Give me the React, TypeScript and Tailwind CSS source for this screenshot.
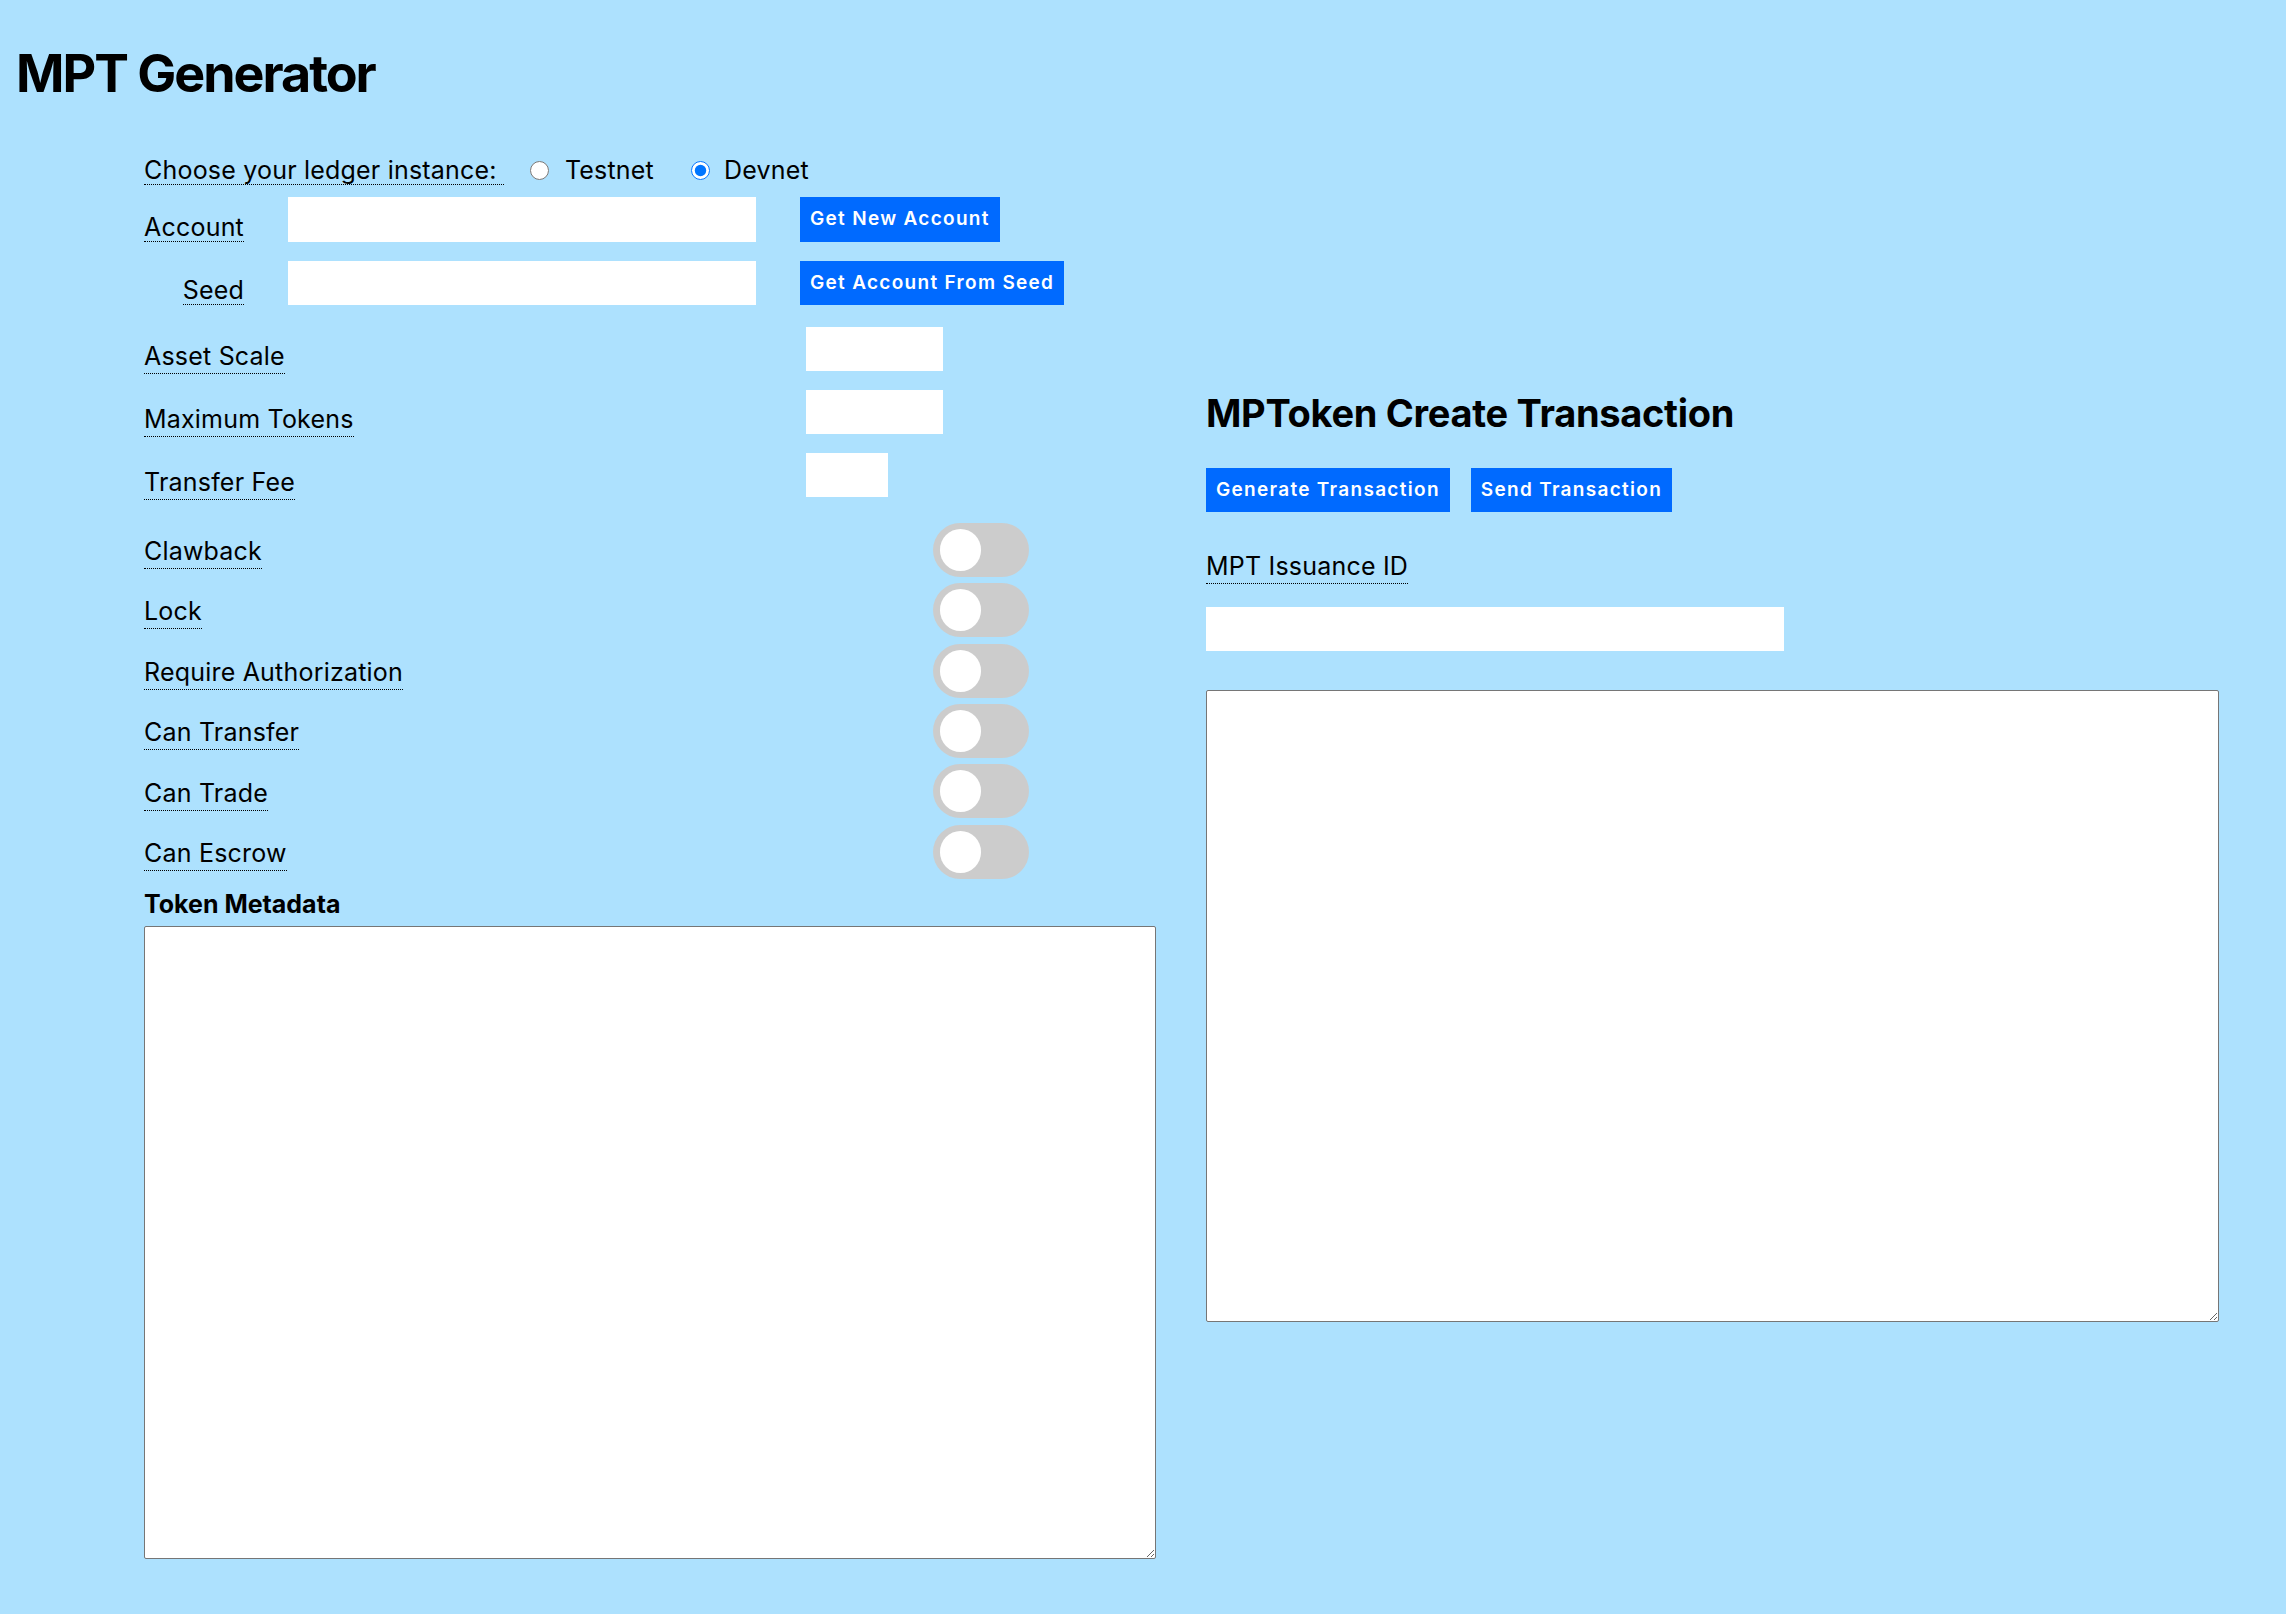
import { useState } from "react";

const font = "font-['Inter','Noto_Sans',sans-serif]";

const toggles = [
    "Clawback",
    "Lock",
    "Require Authorization",
    "Can Transfer",
    "Can Trade",
    "Can Escrow",
];

const Label = ({ children }: { children: React.ReactNode }) => (
    <label className="text-[25px] leading-[24px] tracking-[0.2px] pb-[2px] border-b border-dotted border-black text-black whitespace-nowrap">
        {children}
    </label>
);

const BlueButton = ({ children }: { children: React.ReactNode }) => (
    <button className="h-[44px] px-[10px] bg-[#006aff] text-white text-[19px] font-semibold tracking-[1.3px] whitespace-nowrap">
        {children}
    </button>
);

const Toggle = () => (
    <span className="flex items-center w-[96px] h-[54px] rounded-full bg-[#cccccc] pl-[7px]">
        <span className="w-[41px] h-[42px] rounded-full bg-white" />
    </span>
);

export default function App() {
    const [net, setNet] = useState("devnet");

    return (
        <div className={`min-h-screen bg-[#ade1fe] text-black ${font}`}>
            <div className="px-[16px] pt-[48px] pb-[40px]">
                <h1 className="text-[52px] leading-[52px] font-bold tracking-[-2px]">MPT Generator</h1>

                <div className="flex items-center gap-[49px] ml-[128px] mt-[58px]">
                    {/* left: form */}
                    <div className="flex flex-col w-[1013px]">
                        <div className="flex items-start h-[27px]">
                            <Label>Choose your ledger instance:&nbsp;</Label>
                            <div className="flex items-center h-[24px] ml-[26px] text-[25px] tracking-[0.2px]">
                                <input
                                    type="radio"
                                    name="net"
                                    checked={net === "testnet"}
                                    onChange={() => setNet("testnet")}
                                    className="w-[19px] h-[19px] m-0 accent-[#0075ff]"
                                />
                                <span className="leading-[24px] ml-[16px]">Testnet</span>
                                <input
                                    type="radio"
                                    name="net"
                                    checked={net === "devnet"}
                                    onChange={() => setNet("devnet")}
                                    className="w-[19px] h-[19px] m-0 ml-[37px] accent-[#0075ff]"
                                />
                                <span className="leading-[24px] ml-[14px]">Devnet</span>
                            </div>
                        </div>

                        <div className="flex items-end h-[45px] mt-[11.75px]">
                            <div className="w-[100px] flex justify-end">
                                <Label>Account</Label>
                            </div>
                            <input className="w-[468px] h-[45px] ml-[44px] bg-white outline-none" />
                            <div className="ml-[44px]">
                                <button className="h-[45px] px-[10px] bg-[#006aff] text-white text-[19px] font-semibold tracking-[1.3px] whitespace-nowrap">
                                    Get New Account
                                </button>
                            </div>
                        </div>

                        <div className="flex items-end h-[44px] mt-[19px]">
                            <div className="w-[100px] flex justify-end">
                                <Label>Seed</Label>
                            </div>
                            <input className="w-[468px] h-[44px] ml-[44px] bg-white outline-none" />
                            <div className="ml-[44px]">
                                <BlueButton>Get Account From Seed</BlueButton>
                            </div>
                        </div>

                        <div className="flex items-end h-[44px] mt-[22px]">
                            <div className="w-[662px]">
                                <Label>Asset Scale</Label>
                            </div>
                            <input className="w-[137px] h-[44px] bg-white outline-none" />
                        </div>

                        <div className="flex items-end h-[44px] mt-[19px]">
                            <div className="w-[662px]">
                                <Label>Maximum Tokens</Label>
                            </div>
                            <input className="w-[137px] h-[44px] bg-white outline-none" />
                        </div>

                        <div className="flex items-end h-[44px] mt-[19px]">
                            <div className="w-[662px]">
                                <Label>Transfer Fee</Label>
                            </div>
                            <input className="w-[82px] h-[44px] bg-white outline-none" />
                        </div>

                        <div className="flex flex-col gap-[6.4px] mt-[26px]">
                            {toggles.map((name) => (
                                <div key={name} className="flex items-center h-[54px]">
                                    <div className="w-[789px] pt-[5.5px]">
                                        <Label>{name}</Label>
                                    </div>
                                    <Toggle />
                                </div>
                            ))}
                        </div>

                        <p className="text-[25px] leading-[24px] font-bold mt-[13.25px]">Token Metadata</p>
                        <textarea className="w-[1012px] h-[633px] mt-[9.75px] bg-white border border-[#767676] rounded-[2px] outline-none" />
                    </div>

                    {/* right: transaction */}
                    <div className="flex flex-col w-[1014px]">
                        <h2 className="text-[38px] leading-[38px] font-bold tracking-[-0.3px]">MPToken Create Transaction</h2>
                        <div className="flex gap-[21px] mt-[35.8px]">
                            <BlueButton>Generate Transaction</BlueButton>
                            <BlueButton>Send Transaction</BlueButton>
                        </div>
                        <div className="mt-[41.25px] h-[27px]">
                            <Label>MPT Issuance ID</Label>
                        </div>
                        <input className="w-[578px] h-[44px] mt-[26.75px] bg-white outline-none" />
                        <textarea className="w-[1013px] h-[632px] mt-[39px] bg-white border border-[#767676] rounded-[2px] outline-none" />
                    </div>
                </div>
            </div>
        </div>
    );
}
